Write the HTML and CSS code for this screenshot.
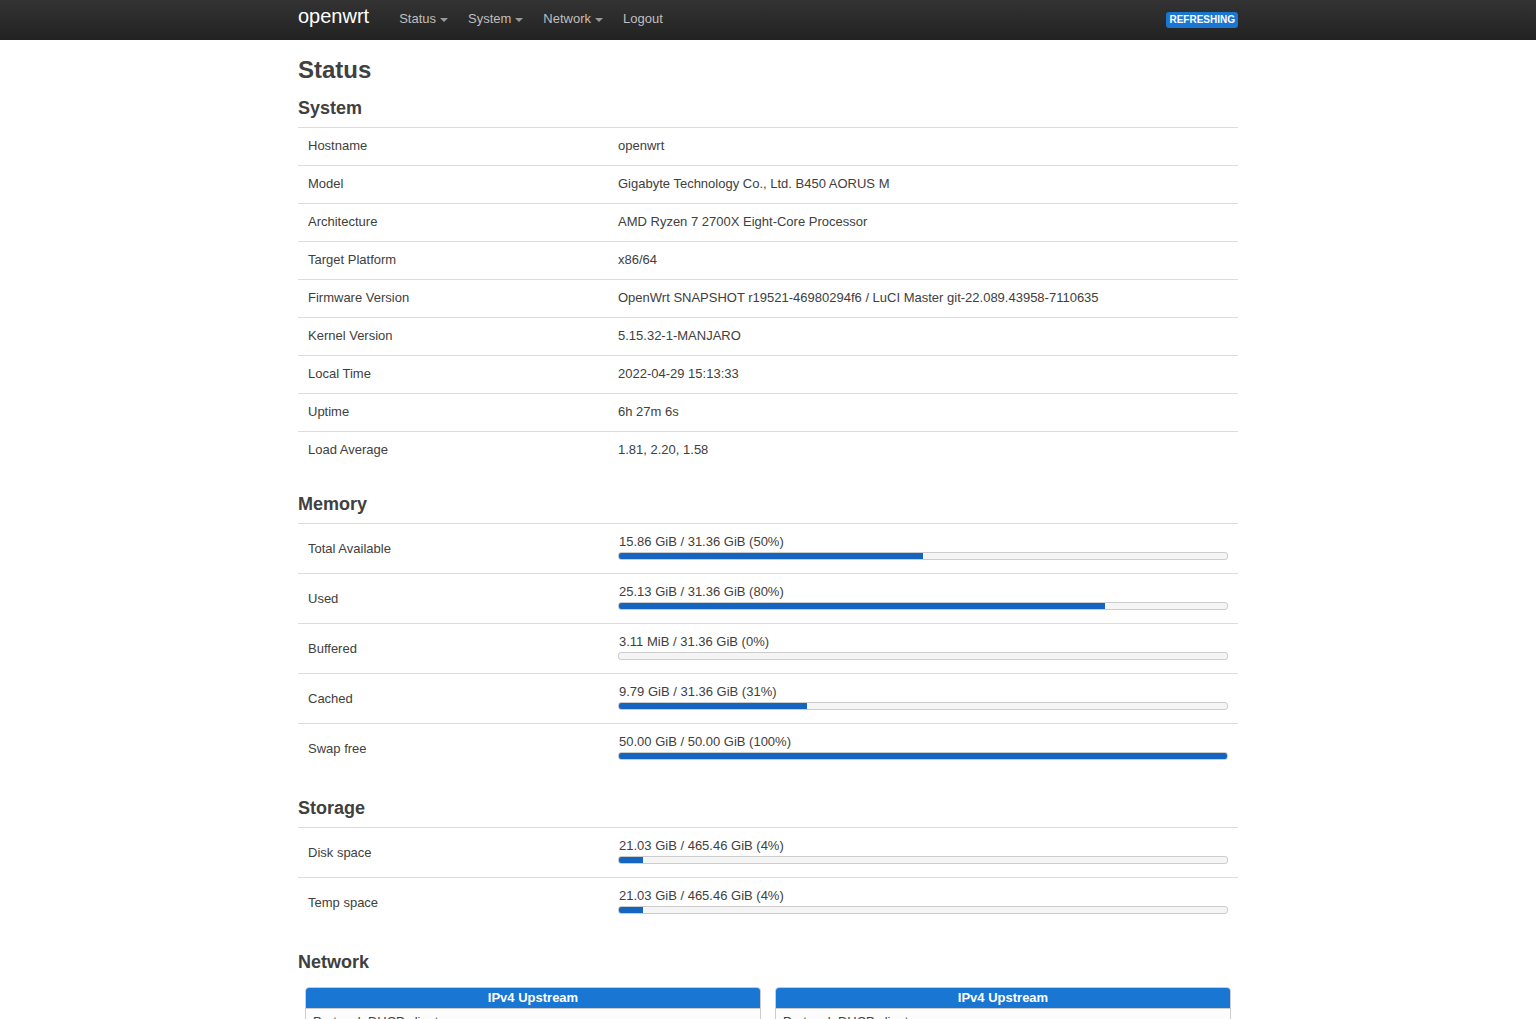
FILE: index.html
```html
<!DOCTYPE html>
<html lang="en">
<head>
<meta charset="utf-8">
<title>openwrt - Status - LuCI</title>
<link rel="stylesheet" href="styles.css">
</head>
<body>
<header class="topbar">
  <div class="container topbar-inner">
    <a class="brand" href="#">openwrt</a>
    <ul class="nav">
      <li><a href="#">Status<span class="caret"></span></a></li>
      <li><a href="#">System<span class="caret"></span></a></li>
      <li><a href="#">Network<span class="caret"></span></a></li>
      <li><a href="#">Logout</a></li>
    </ul>
    <div class="indicators"><span class="label">Refreshing</span></div>
  </div>
</header>

<main class="container main">
  <h2 class="page-title">Status</h2>

  <section class="section">
    <h3>System</h3>
    <table class="table">
      <tr><td class="key">Hostname</td><td>openwrt</td></tr>
      <tr><td class="key">Model</td><td>Gigabyte Technology Co., Ltd. B450 AORUS M</td></tr>
      <tr><td class="key">Architecture</td><td>AMD Ryzen 7 2700X Eight-Core Processor</td></tr>
      <tr><td class="key">Target Platform</td><td>x86/64</td></tr>
      <tr><td class="key">Firmware Version</td><td>OpenWrt SNAPSHOT r19521-46980294f6 / LuCI Master git-22.089.43958-7110635</td></tr>
      <tr><td class="key">Kernel Version</td><td>5.15.32-1-MANJARO</td></tr>
      <tr><td class="key">Local Time</td><td>2022-04-29 15:13:33</td></tr>
      <tr><td class="key">Uptime</td><td>6h 27m 6s</td></tr>
      <tr><td class="key">Load Average</td><td>1.81, 2.20, 1.58</td></tr>
    </table>
  </section>

  <section class="section">
    <h3>Memory</h3>
    <table class="table progress-table">
      <tr><td class="key">Total Available</td><td><div class="pb-text">15.86 GiB / 31.36 GiB (50%)</div><div class="pb"><div class="pb-fill" style="width:50%"></div></div></td></tr>
      <tr><td class="key">Used</td><td><div class="pb-text">25.13 GiB / 31.36 GiB (80%)</div><div class="pb"><div class="pb-fill" style="width:80%"></div></div></td></tr>
      <tr><td class="key">Buffered</td><td><div class="pb-text">3.11 MiB / 31.36 GiB (0%)</div><div class="pb"><div class="pb-fill" style="width:0%"></div></div></td></tr>
      <tr><td class="key">Cached</td><td><div class="pb-text">9.79 GiB / 31.36 GiB (31%)</div><div class="pb"><div class="pb-fill" style="width:31%"></div></div></td></tr>
      <tr><td class="key">Swap free</td><td><div class="pb-text">50.00 GiB / 50.00 GiB (100%)</div><div class="pb"><div class="pb-fill" style="width:100%"></div></div></td></tr>
    </table>
  </section>

  <section class="section">
    <h3>Storage</h3>
    <table class="table progress-table">
      <tr><td class="key">Disk space</td><td><div class="pb-text">21.03 GiB / 465.46 GiB (4%)</div><div class="pb"><div class="pb-fill" style="width:4%"></div></div></td></tr>
      <tr><td class="key">Temp space</td><td><div class="pb-text">21.03 GiB / 465.46 GiB (4%)</div><div class="pb"><div class="pb-fill" style="width:4%"></div></div></td></tr>
    </table>
  </section>

  <section class="section">
    <h3>Network</h3>
    <div class="ifaces">
      <div class="ifacebox">
        <div class="ifacebox-head">IPv4 Upstream</div>
        <div class="ifacebox-body">Protocol: DHCP client<br>Address: 192.168.1.2/24<br>Gateway: 192.168.1.1</div>
      </div>
      <div class="ifacebox">
        <div class="ifacebox-head">IPv4 Upstream</div>
        <div class="ifacebox-body">Protocol: DHCP client<br>Address: 10.0.0.2/24<br>Gateway: 10.0.0.1</div>
      </div>
    </div>
  </section>
</main>
</body>
</html>
```

FILE: styles.css
```css
* { box-sizing: border-box; }

html, body {
  margin: 0;
  padding: 0;
}

body {
  font-family: "Liberation Sans", Arial, sans-serif;
  font-size: 13px;
  line-height: 18px;
  color: #404040;
  background: #fff;
}

a { text-decoration: none; }

.container {
  width: 940px;
  margin: 0 auto;
}

/* top bar */
.topbar {
  height: 40px;
  background: linear-gradient(to bottom, #333333, #222222);
}

.topbar-inner {
  display: flex;
  align-items: flex-start;
  height: 40px;
}

.brand {
  display: block;
  margin-left: -20px;
  padding: 6px 20px 14px;
  font-size: 20px;
  line-height: 20px;
  color: #ffffff;
}

.nav {
  display: flex;
  list-style: none;
  margin: 0;
  padding: 0;
}

.nav a {
  display: flex;
  align-items: center;
  padding: 9px 10px 12px;
  line-height: 19px;
  color: #bfbfbf;
}

.caret {
  display: inline-block;
  width: 0;
  height: 0;
  margin-left: 4px;
  margin-top: 2px;
  border-left: 4px solid transparent;
  border-right: 4px solid transparent;
  border-top: 4px solid #9a9a9a;
}

.indicators {
  margin-left: auto;
  padding-top: 12px;
}

.label {
  display: block;
  padding: 2px 3px 2px;
  font-size: 10px;
  line-height: 12px;
  font-weight: bold;
  text-transform: uppercase;
  color: #fff;
  background: #1976d2;
  border-radius: 3px;
}

/* main */
.main {
  padding-top: 12px;
}

.page-title {
  margin: 0;
  padding-bottom: 1px;
  font-size: 24px;
  line-height: 36px;
  font-weight: bold;
  color: #404040;
}

.section {
  margin-bottom: 22px;
}

.section h3 {
  margin: 6px 0 5px;
  font-size: 18px;
  line-height: 27px;
  font-weight: bold;
  color: #404040;
}

.table {
  width: 100%;
  border-collapse: collapse;
  border-spacing: 0;
}

.table td {
  padding: 9px 10px 10px;
  border-top: 1px solid #dddddd;
  vertical-align: middle;
  text-align: left;
}

.table td.key {
  width: 310px;
}

.progress-table td {
  padding: 10px 10px 13px;
}

.progress-table td.key {
  padding: 11px 10px 10px;
}

.pb-text {
  line-height: 16px;
  padding-left: 1px;
}

.pb {
  height: 8px;
  margin-top: 2px;
  border: 1px solid #cccccc;
  border-radius: 3px;
  background: #f5f5f5;
  overflow: hidden;
}

.pb-fill {
  height: 100%;
  background: #1565c0;
}

/* network */
.ifaces {
  display: grid;
  grid-template-columns: 1fr 1fr;
  column-gap: 14px;
  padding: 0 7px;
  margin-top: 11px;
}

.ifacebox {
  border: 1px solid #cccccc;
  border-radius: 4px 4px 0 0;
  overflow: hidden;
}

.ifacebox-head {
  background: #1976d2;
  color: #ffffff;
  font-weight: bold;
  text-align: center;
  line-height: 18px;
  padding: 1px 0 1px;
  border-bottom: 1px solid #cccccc;
}

.ifacebox-body {
  padding: 4px 7px 6px;
  background: #fcfcfc;
}
```
